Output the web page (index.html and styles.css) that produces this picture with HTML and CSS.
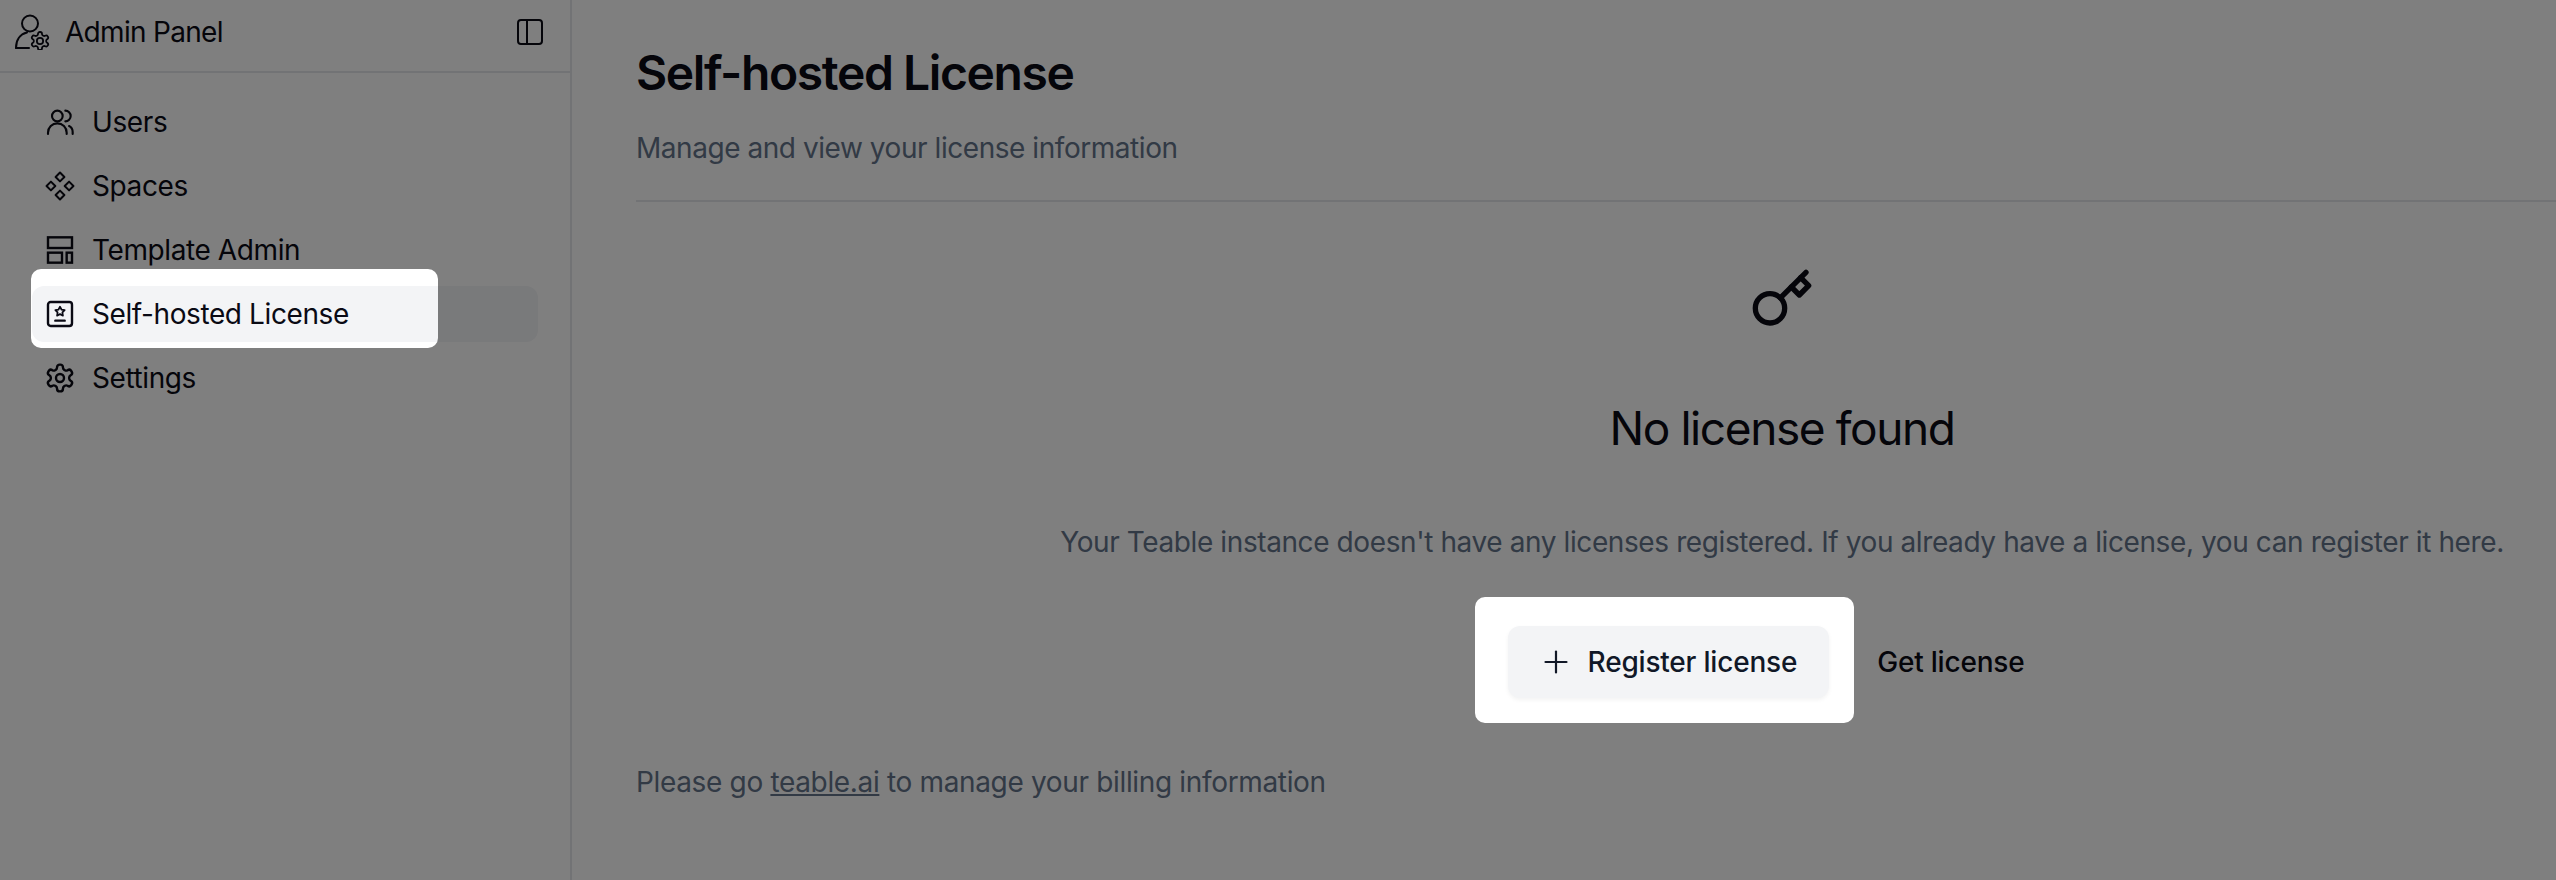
FILE: index.html
```html
<!DOCTYPE html>
<html lang="en">
<head>
<meta charset="UTF-8" />
<meta name="viewport" content="width=device-width, initial-scale=1" />
<title>Self-hosted License</title>
<link rel="stylesheet" href="styles.css">
</head>
<body>

<aside class="sidebar">
  <div class="sidebar-head">
    <svg class="admin-icon" viewBox="0 0 36 36" fill="none" stroke="currentColor" stroke-width="2" stroke-linecap="round" stroke-linejoin="round">
      <circle cx="16" cy="9.500" r="8"/>
      <path d="M2 34c0-8 4-14 11-15.500"/>
      <path d="M2 34h13"/>
      <g transform="translate(15.200 16.200) scale(.9)">
        <path d="M12.220 2h-.44a2 2 0 0 0-2 2v.18a2 2 0 0 1-1 1.730l-.43.250a2 2 0 0 1-2 0l-.15-.08a2 2 0 0 0-2.730.730l-.22.380a2 2 0 0 0 .730 2.730l.15.100a2 2 0 0 1 1 1.720v.510a2 2 0 0 1-1 1.740l-.15.090a2 2 0 0 0-.730 2.730l.22.380a2 2 0 0 0 2.730.730l.15-.08a2 2 0 0 1 2 0l.43.250a2 2 0 0 1 1 1.730V20a2 2 0 0 0 2 2h.44a2 2 0 0 0 2-2v-.18a2 2 0 0 1 1-1.730l.43-.25a2 2 0 0 1 2 0l.15.080a2 2 0 0 0 2.730-.730l.22-.39a2 2 0 0 0-.730-2.730l-.15-.08a2 2 0 0 1-1-1.740v-.5a2 2 0 0 1 1-1.740l.15-.09a2 2 0 0 0 .730-2.730l-.22-.38a2 2 0 0 0-2.730-.730l-.15.080a2 2 0 0 1-2 0l-.43-.25a2 2 0 0 1-1-1.730V4a2 2 0 0 0-2-2z"/>
        <circle cx="12" cy="12" r="3.500"/>
      </g>
    </svg>
    <span class="sidebar-title">Admin Panel</span>
    <svg class="toggle-icon" viewBox="0 0 28 28" fill="none" stroke="currentColor" stroke-width="2" stroke-linejoin="round">
      <rect x="2" y="2" width="24" height="24" rx="3"/>
      <path d="M11 2v24"/>
    </svg>
  </div>
  <ul class="nav-list">
    <li class="nav-item">
      <svg class="nav-icon" viewBox="0 0 24 24" fill="none" stroke="currentColor" stroke-width="1.600" stroke-linecap="round" stroke-linejoin="round">
        <circle cx="10" cy="7.500" r="4"/>
        <path d="M3 21v-1a7 7 0 0 1 14 0v1"/>
        <path d="M16 3.500a4 4 0 0 1 0 8"/>
        <path d="M21.500 21v-1.500c0-2-1-3.700-2.700-4.500"/>
      </svg>
      <span>Users</span>
    </li>
    <li class="nav-item">
      <svg class="nav-icon" viewBox="0 0 24 24" fill="none" stroke="currentColor" stroke-width="1.500" stroke-linejoin="round">
        <path d="M12 1.900l3.300 3.300-3.300 3.300-3.300-3.300z"/>
        <path d="M12 15.500l3.300 3.300-3.300 3.300-3.300-3.300z"/>
        <path d="M5.200 8.700l3.300 3.300-3.300 3.300-3.300-3.300z"/>
        <path d="M18.800 8.700l3.300 3.300-3.300 3.300-3.300-3.300z"/>
      </svg>
      <span>Spaces</span>
    </li>
    <li class="nav-item">
      <svg class="nav-icon" viewBox="0 0 24 24" fill="none" stroke="currentColor" stroke-width="1.800">
        <rect x="3" y="2.500" width="18" height="8"/>
        <rect x="3" y="14" width="10.500" height="7.500"/>
        <rect x="17" y="14" width="4" height="7.500"/>
      </svg>
      <span>Template Admin</span>
    </li>
    <li class="nav-item active">
      <svg class="nav-icon" viewBox="0 0 24 24" fill="none" stroke="currentColor" stroke-width="1.800" stroke-linecap="round" stroke-linejoin="round">
        <rect x="3" y="3" width="18" height="18" rx="2"/>
        <path d="M12 6.500l1.200 2.300 2.300.300-1.700 1.700.4 2.400-2.200-1.100-2.200 1.100.4-2.400-1.700-1.700 2.300-.300z" stroke-width="1.300"/>
        <path d="M8.500 17h7"/>
      </svg>
      <span>Self-hosted License</span>
    </li>
    <li class="nav-item">
      <svg class="nav-icon" viewBox="0 0 24 24" fill="none" stroke="currentColor" stroke-width="1.800" stroke-linecap="round" stroke-linejoin="round">
        <path d="M12.220 2h-.44a2 2 0 0 0-2 2v.18a2 2 0 0 1-1 1.730l-.43.250a2 2 0 0 1-2 0l-.15-.08a2 2 0 0 0-2.730.730l-.22.380a2 2 0 0 0 .730 2.730l.15.100a2 2 0 0 1 1 1.720v.510a2 2 0 0 1-1 1.740l-.15.090a2 2 0 0 0-.730 2.730l.22.380a2 2 0 0 0 2.730.730l.15-.08a2 2 0 0 1 2 0l.43.250a2 2 0 0 1 1 1.730V20a2 2 0 0 0 2 2h.44a2 2 0 0 0 2-2v-.18a2 2 0 0 1 1-1.730l.43-.25a2 2 0 0 1 2 0l.15.080a2 2 0 0 0 2.730-.730l.22-.39a2 2 0 0 0-.730-2.730l-.15-.08a2 2 0 0 1-1-1.740v-.5a2 2 0 0 1 1-1.740l.15-.09a2 2 0 0 0 .730-2.730l-.22-.38a2 2 0 0 0-2.730-.730l-.15.080a2 2 0 0 1-2 0l-.43-.25a2 2 0 0 1-1-1.730V4a2 2 0 0 0-2-2z"/>
        <circle cx="12" cy="12" r="3"/>
      </svg>
      <span>Settings</span>
    </li>
  </ul>
</aside>

<main class="content">
  <h1 class="page-title">Self-hosted License</h1>
  <p class="page-sub">Manage and view your license information</p>
  <hr class="divider" />

  <section class="empty">
    <svg class="key-icon" viewBox="0 0 24 24" fill="none" stroke="currentColor" stroke-width="2" stroke-linecap="round" stroke-linejoin="round">
      <circle cx="7.500" cy="15.500" r="5.500"/>
      <path d="m21 2-9.600 9.600"/>
      <path d="m15.500 7.500 3 3L22 7l-3-3"/>
    </svg>
    <h2 class="empty-title">No license found</h2>
    <p class="empty-text">Your Teable instance doesn't have any licenses registered. If you already have a license, you can register it here.</p>
    <div class="empty-actions">
      <button class="btn btn-secondary">
        <svg class="plus-icon" viewBox="0 0 32 32" fill="none" stroke="currentColor" stroke-width="2.200" stroke-linecap="round">
          <path d="M5.500 16h21"/>
          <path d="M16 5.500v21"/>
        </svg>
        Register license
      </button>
      <button class="btn btn-ghost">Get license</button>
    </div>
  </section>

  <p class="billing">Please go <a href="#">teable.ai</a> to manage your billing information</p>
</main>

<!-- tour overlay, two holes: nav item and register button -->
<svg class="tour-dim" viewBox="0 0 2556 880">
  <path fill-rule="evenodd" d="M0 0H2556V880H0Z
    M41 269H428a10 10 0 0 1 10 10V338a10 10 0 0 1-10 10H41a10 10 0 0 1-10-10V279a10 10 0 0 1 10-10Z
    M1485 597H1844a10 10 0 0 1 10 10V713a10 10 0 0 1-10 10H1485a10 10 0 0 1-10-10V607a10 10 0 0 1 10-10Z"/>
</svg>

</body>
</html>
```

FILE: styles.css
```css
* {
  box-sizing: border-box;
}
html, body {
  height: 880px;
}
body {
  margin: 0;
  display: flex;
  overflow: hidden;
  background: white;
  color: #0a0a14;
  font-family: Inter, "Noto Sans", sans-serif;
  font-size: 28px;
  letter-spacing: -0.4px;
}
/* Sidebar */
.sidebar {
  width: 572px;
  flex-shrink: 0;
  border-right: 2px solid #e5e7eb;
}
.sidebar-head {
  height: 73px;
  padding: 0 26px 7px 14px;
  display: flex;
  align-items: center;
  border-bottom: 2px solid #e5e7eb;
}
.admin-icon {
  width: 36px;
  height: 36px;
  margin-right: 15px;
}
.sidebar-title {
  flex-grow: 1;
  letter-spacing: -0.7px;
}
.toggle-icon {
  width: 28px;
  height: 28px;
}
.nav-list {
  list-style: none;
  margin: 0;
  padding: 21px 32px 0;
  display: flex;
  flex-direction: column;
  gap: 8px;
}
.nav-item {
  height: 56px;
  padding: 0 12px;
  display: flex;
  align-items: center;
  gap: 16px;
  border-radius: 12px;
}
.nav-item.active {
  background: #f3f4f6;
}
.nav-icon {
  width: 32px;
  height: 32px;
  flex-shrink: 0;
}
/* Main */
.content {
  flex-grow: 1;
  min-width: 0;
  padding: 0 0 0 64px;
}
.page-title {
  margin: 0;
  padding-top: 40px;
  font-size: 48px;
  line-height: 66px;
  font-weight: 600;
  letter-spacing: -1.4px;
}
.page-sub {
  margin: 24px 0 0;
  line-height: 36px;
  color: #64748b;
  letter-spacing: -0.45px;
}
.divider {
  margin: 34px 0 0;
  border: none;
  border-top: 2px solid #e5e7eb;
}
.empty {
  width: 2292px;
  display: flex;
  flex-direction: column;
  align-items: center;
}
.key-icon {
  width: 64px;
  height: 64px;
  margin-top: 65px;
}
.empty-title {
  margin: 65px 0 0;
  font-size: 46px;
  line-height: 64px;
  font-weight: 400;
  letter-spacing: -1.4px;
}
.empty-text {
  margin: 62px 0 0;
  line-height: 40px;
  color: #64748b;
}
.empty-actions {
  margin-top: 64px;
  display: flex;
  gap: 16px;
}
.btn {
  height: 72px;
  padding: 0 32px;
  display: flex;
  align-items: center;
  gap: 16px;
  border: none;
  border-radius: 12px;
  background: transparent;
  color: #0a0a14;
  font-family: inherit;
  font-size: 28px;
  font-weight: 500;
  letter-spacing: -0.2px;
}
.btn-secondary {
  background: #f3f4f6;
  color: #111827;
  box-shadow: 0 2px 4px rgb(0 0 0 / 0.05);
}
.plus-icon {
  width: 32px;
  height: 32px;
}
.billing {
  margin: 64px 0 0;
  line-height: 40px;
  color: #64748b;
  letter-spacing: -0.34px;
}
.billing a {
  color: inherit;
}
/* Tour overlay */
.tour-dim {
  position: fixed;
  left: 0;
  top: 0;
  width: 2556px;
  height: 880px;
  fill: rgb(0 0 0 / 0.5);
}
```
